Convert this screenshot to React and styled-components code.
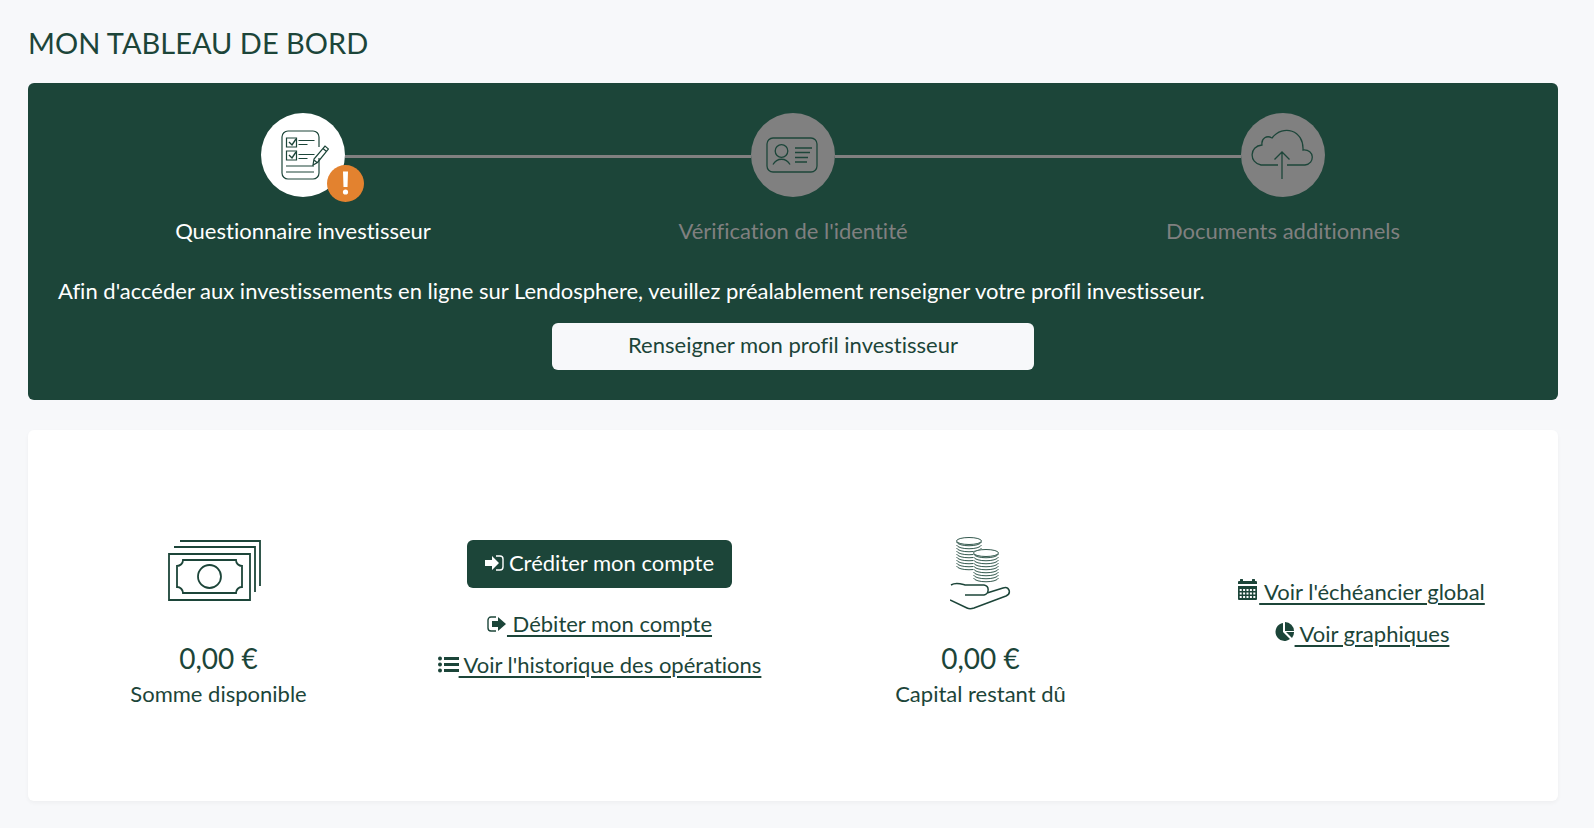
import styled, { createGlobalStyle } from "styled-components";

const GlobalStyle = createGlobalStyle`
  * {
    box-sizing: border-box;
  }

  body {
    margin: 0;
    background-color: #f7f8fa;
    color: #1c4539;
    font-family: Lato, "Open Sans", sans-serif;
    font-size: 22px;
    line-height: 32px;
    font-variant-ligatures: none;
  }
`;

const Page = styled.main`
  padding: 23px 36px 26px 28px;
`;

const Title = styled.h1`
  margin: 0 0 20px;
  font-size: 29px;
  line-height: 40px;
  font-weight: 400;
`;

const StepsCard = styled.section`
  padding: 30px;
  border-radius: 6px;
  background-color: #1c4539;
  color: #ffffff;
`;

const StepList = styled.ol`
  display: grid;
  grid-template-columns: repeat(3, 1fr);
  margin: 0 0 28px;
  padding: 0;
  list-style: none;
`;

const Step = styled.li`
  display: flex;
  flex-direction: column;
  align-items: center;
  gap: 18px;
  color: ${(props) => (props.$active ? "#ffffff" : "#808080")};
`;

const StepTrack = styled.div`
  display: flex;
  align-items: center;
  width: 100%;
`;

const StepLine = styled.span`
  flex: 1;
  height: 3px;
  margin-top: 2px;
  background-color: ${(props) => (props.$hidden ? "transparent" : "#808080")};
`;

const StepCircle = styled.span`
  position: relative;
  display: flex;
  justify-content: center;
  align-items: center;
  width: 84px;
  height: 84px;
  border-radius: 50%;
  background-color: ${(props) => (props.$active ? "#ffffff" : "#808080")};
  color: #1c4539;
`;

const StepBadge = styled.span`
  position: absolute;
  right: -19px;
  bottom: -5px;
  width: 37px;
  height: 37px;
`;

const StepText = styled.p`
  margin: 0 0 16px;
`;

const ProfileButton = styled.button`
  display: block;
  width: calc(33% - 4px);
  margin: 0 auto;
  padding: 6px 12px 9px;
  border: 0;
  border-radius: 6px;
  background-color: #f7f8fa;
  color: #1c4539;
  font: inherit;
  font-variant-ligatures: none;
  cursor: pointer;
`;

const SummaryCard = styled.section`
  display: grid;
  grid-template-columns: repeat(4, 1fr);
  align-items: center;
  margin-top: 30px;
  padding: 105px 6px 91px 0;
  border-radius: 6px;
  background-color: #ffffff;
  box-shadow: 0 2px 4px rgba(0, 0, 0, 0.04);
`;

const Column = styled.div`
  display: flex;
  flex-direction: column;
  align-items: center;
`;

const ActionColumn = styled(Column)`
  gap: ${(props) => props.$gap}px;
  padding-bottom: ${(props) => props.$bottom}px;
`;

const Picture = styled.div`
  display: flex;
  align-items: center;
  height: 76px;
  margin-bottom: 27px;
`;

const Amount = styled.strong`
  font-size: 28px;
  line-height: 40px;
  font-weight: 400;
`;

const CreditButton = styled.button`
  display: flex;
  align-items: center;
  gap: 5px;
  margin-bottom: 11px;
  padding: 7px 18px 9px;
  border: 0;
  border-radius: 6px;
  background-color: #1c4539;
  color: #ffffff;
  font: inherit;
  cursor: pointer;
`;

const ActionLink = styled.a`
  color: #1c4539;
  text-decoration: none;
  white-space: pre;

  span {
    text-decoration: underline;
    text-decoration-thickness: 2px;
    text-underline-offset: 3px;
  }
`;

const QuestionnaireIcon = () => (
  <svg width="52" height="50" viewBox="-4 0 52 50" fill="none" stroke="currentColor" strokeWidth="1.2">
    <path d="M38 17V7a6 6 0 0 0-6-6H7a6 6 0 0 0-6 6v36a6 6 0 0 0 6 6h25a6 6 0 0 0 6-6V28" />
    <path d="M5.500 8h10v9h-10zM5.500 21h10v9h-10z" />
    <path d="m8 12 3 3 4-6M8 25l3 3 4-6" strokeWidth="1.4" />
    <path d="M17.500 10.500h16M17.500 14.500h9M17.500 24.500h16M17.500 28.500h9M5 36h28M5 42h28" />
    <path d="m32 35 1-6 11-13 3.500 3L36.500 32.500zM42 18.500l3.500 3M33 30l3 2.500" />
  </svg>
);

const IdentityIcon = () => (
  <svg width="54" height="36" viewBox="0 0 54 36" fill="none" stroke="currentColor" strokeWidth="1.3">
    <rect x="1" y="1" width="50" height="34" rx="6" />
    <circle cx="15.500" cy="14" r="6.300" />
    <path d="M7 27.500c4-7 13-7 17 0M29 11h17M29 15.500h15M29 20.500h13M29 25h12" />
  </svg>
);

const CloudIcon = () => (
  <svg width="64" height="53" viewBox="0 0 64 53" fill="none" stroke="currentColor" strokeWidth="1.3">
    <path d="M27 36H10C-2 34-2 17 11 16c-1-7 5-10 10-7 11-14 32-8 31 12 12-1 12 14 2 15H36" />
    <path d="M31 50V23M23.500 30.500 31 23l7.500 7.500" />
  </svg>
);

const AlertIcon = () => (
  <svg width="37" height="37" viewBox="0 0 37 37">
    <circle cx="18.500" cy="18.500" r="18.500" fill="#e3822f" />
    <path d="M16 6.500h5l-.5 15.500h-4z" fill="#fff" />
    <circle cx="18.500" cy="27" r="2.600" fill="#fff" />
  </svg>
);

const BillsIcon = () => (
  <svg width="102" height="68" viewBox="0 0 102 68" fill="none" stroke="currentColor" strokeWidth="1.800">
    <path d="M1 15h81v46H1zM6 8h81v45M12 2h80v45" />
    <path d="M15 21h53a6 6 0 0 0 6 6v21a6 6 0 0 0-6 6H15a6 6 0 0 0-6-6V27a6 6 0 0 0 6-6z" />
    <circle cx="41.500" cy="37.500" r="11.500" />
  </svg>
);

const coinRows = [3, 6, 9, 12, 15, 18, 21, 24, 27];

const CoinStack = () => (
  <>
    <ellipse cx="13" cy="4" rx="12.500" ry="3.500" />
    {coinRows.map((y) => (
      <path key={y} d={`M.5 ${y + 2}c2 5 23 5 25 0`} />
    ))}
  </>
);

const CoinsIcon = () => (
  <svg width="61" height="74" viewBox="0 0 61 74" fill="none" stroke="currentColor">
    <g transform="translate(6 1)" strokeWidth=".9">
      <CoinStack />
    </g>
    <path d="M23 17a13 4 0 0 1 26 0v29H23z" fill="#fff" stroke="none" />
    <g transform="translate(23 13)" strokeWidth=".9">
      <CoinStack />
    </g>
    <path
      d="M1 49c5-3 10-1 14 0h19c6 1 5 9 0 10H15M37 57l16-5c6-2 9 5 3 8L24 72c-3 1-5 1-7 0L0 64"
      strokeWidth="1.500"
    />
  </svg>
);

const CreditIcon = () => (
  <svg width="19" height="16" viewBox="0 0 19 16">
    <path d="M0 5h7V1l7 7-7 7v-4H0z" fill="currentColor" />
    <path d="M11 1h4a3 3 0 0 1 3 3v8a3 3 0 0 1-3 3h-4" fill="none" stroke="currentColor" strokeWidth="1.400" />
  </svg>
);

const DebitIcon = () => (
  <svg width="20" height="16" viewBox="0 0 20 16">
    <path d="M5 5h6V1l8 7-8 7v-4H5z" fill="currentColor" />
    <path d="M9 1H4a3 3 0 0 0-3 3v8a3 3 0 0 0 3 3h5" fill="none" stroke="currentColor" strokeWidth="1.400" />
  </svg>
);

const ListIcon = () => (
  <svg width="21" height="17" viewBox="0 0 21 17" fill="currentColor">
    <circle cx="2" cy="2.500" r="2" />
    <circle cx="2" cy="8.500" r="2" />
    <circle cx="2" cy="14.500" r="2" />
    <path d="M6 1h15v3H6zM6 7h15v3H6zM6 13h15v3H6z" />
  </svg>
);

const CalendarIcon = () => (
  <svg width="21" height="21" viewBox="0 0 21 21">
    <path d="M0 5V3a1 1 0 0 1 1-1h1V1a1 1 0 0 1 3 0v1h9V1a1 1 0 0 1 3 0v1h1a1 1 0 0 1 1 1v2zM0 7h19v13a1 1 0 0 1-1 1H1a1 1 0 0 1-1-1z" fill="currentColor" />
    <path d="M1.700 11h16M1.700 14.500h16M1.700 18h16" stroke="#fff" strokeWidth="2" strokeDasharray="2 1.400" />
  </svg>
);

const ChartIcon = () => (
  <svg width="21" height="20" viewBox="0 0 21 20" fill="currentColor">
    <path d="M9 1v9l7 7A9 9 0 1 1 9 1zM11 0a9 9 0 0 1 9 9h-9zM12 10h8a9 9 0 0 1-2 6z" />
  </svg>
);

const steps = [
  { label: "Questionnaire investisseur", icon: <QuestionnaireIcon />, active: true },
  { label: "Vérification de l'identité", icon: <IdentityIcon /> },
  { label: "Documents additionnels", icon: <CloudIcon /> },
];

const App = () => {
  return (
    <>
      <GlobalStyle />
      <Page>
        <Title>MON TABLEAU DE BORD</Title>
        <StepsCard>
          <StepList>
            {steps.map((step, index) => (
              <Step key={step.label} $active={step.active}>
                <StepTrack>
                  <StepLine $hidden={index === 0} />
                  <StepCircle $active={step.active}>
                    {step.icon}
                    {step.active && (
                      <StepBadge>
                        <AlertIcon />
                      </StepBadge>
                    )}
                  </StepCircle>
                  <StepLine $hidden={index === steps.length - 1} />
                </StepTrack>
                {step.label}
              </Step>
            ))}
          </StepList>
          <StepText>
            Afin d'accéder aux investissements en ligne sur Lendosphere, veuillez préalablement renseigner votre
            profil investisseur.
          </StepText>
          <ProfileButton>Renseigner mon profil investisseur</ProfileButton>
        </StepsCard>

        <SummaryCard>
          <Column>
            <Picture>
              <BillsIcon />
            </Picture>
            <Amount>0,00 €</Amount>
            Somme disponible
          </Column>
          <ActionColumn $gap={9} $bottom={25}>
            <CreditButton>
              <CreditIcon />
              Créditer mon compte
            </CreditButton>
            <ActionLink href="#debit">
              <DebitIcon />
              <span> Débiter mon compte</span>
            </ActionLink>
            <ActionLink href="#historique">
              <ListIcon />
              <span> Voir l'historique des opérations</span>
            </ActionLink>
          </ActionColumn>
          <Column>
            <Picture>
              <CoinsIcon />
            </Picture>
            <Amount>0,00 €</Amount>
            Capital restant dû
          </Column>
          <ActionColumn $gap={10} $bottom={20}>
            <ActionLink href="#echeancier">
              <CalendarIcon />
              <span> Voir l'échéancier global</span>
            </ActionLink>
            <ActionLink href="#graphiques">
              <ChartIcon />
              <span> Voir graphiques</span>
            </ActionLink>
          </ActionColumn>
        </SummaryCard>
      </Page>
    </>
  );
};

export default App;
